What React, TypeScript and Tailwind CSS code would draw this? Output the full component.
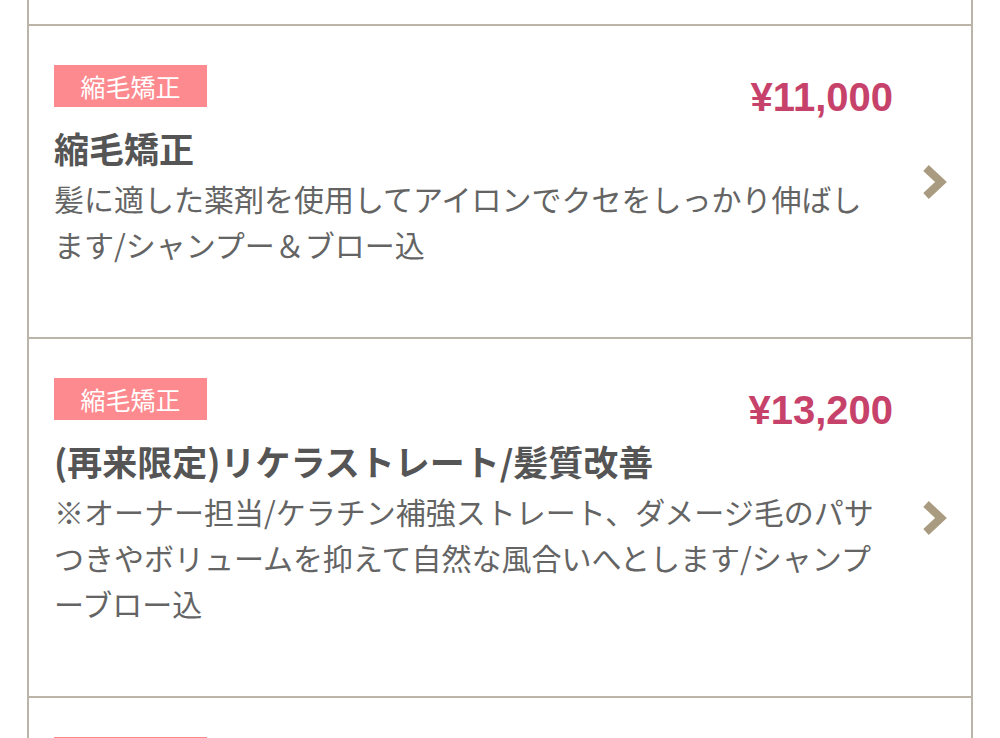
import React from 'react'

interface MenuItem {
  tag: string
  title: string
  price: string
  description: string
}

const items: MenuItem[] = [
  {
    tag: '縮毛矯正',
    title: '縮毛矯正',
    price: '¥11,000',
    description: '髪に適した薬剤を使用してアイロンでクセをしっかり伸ばします/シャンプー＆ブロー込',
  },
  {
    tag: '縮毛矯正',
    title: '(再来限定)リケラストレート/髪質改善',
    price: '¥13,200',
    description:
      '※オーナー担当/ケラチン補強ストレート、ダメージ毛のパサつきやボリュームを抑えて自然な風合いへとします/シャンプーブロー込',
  },
  {
    tag: '縮毛矯正',
    title: '縮毛矯正+カット',
    price: '¥15,400',
    description: 'くせ毛やうねりを抑えてまとまりのある髪へ/シャンプー＆ブロー込',
  },
]

const Chevron = () => (
  <svg width="26" height="38" viewBox="0 0 26 38" fill="none">
    <polyline
      points="5,5 20,19 5,33"
      stroke="#a99b80"
      strokeWidth="8"
      strokeLinejoin="miter"
      strokeLinecap="butt"
    />
  </svg>
)

const MenuCard: React.FC<{ item: MenuItem }> = ({ item }) => {
  return (
    <div className="border-t-2 border-[#bab4a9] flex items-center pl-[25px]">
      <div className="w-[839px] flex flex-col pt-[39px] pb-[70px]">
        <div className="flex justify-between items-start h-[42px]">
          <span className="w-[153px] h-[42px] bg-[#fd8a8e] text-white text-[25px] leading-[42px] text-center font-['Noto_Sans_CJK_JP',sans-serif]">
            {item.tag}
          </span>
          <span className="mt-[12px] text-[40px] leading-[40px] font-bold text-[#c7426a] font-['Liberation_Sans',Arial,sans-serif]">
            {item.price}
          </span>
        </div>
        <h3 className="mt-[19px] text-[35px] leading-[44px] font-bold text-[#555555] font-['Noto_Sans_CJK_JP',sans-serif]">
          {item.title}
        </h3>
        <p className="mt-[5px] pr-[10px] text-[30px] leading-[46px] text-[#646464] font-['Noto_Sans_CJK_JP',sans-serif]">
          {item.description}
        </p>
      </div>
      <div className="ml-[28px] flex items-center">
        <Chevron />
      </div>
    </div>
  )
}

export default function App() {
  return (
    <div className="h-[738px] overflow-hidden bg-white">
      <div className="w-[946px] mx-auto border-x-2 border-[#bab4a9] bg-white">
        <div className="h-[24px]" />
        {items.map((item, index) => (
          <MenuCard key={index} item={item} />
        ))}
      </div>
    </div>
  )
}
